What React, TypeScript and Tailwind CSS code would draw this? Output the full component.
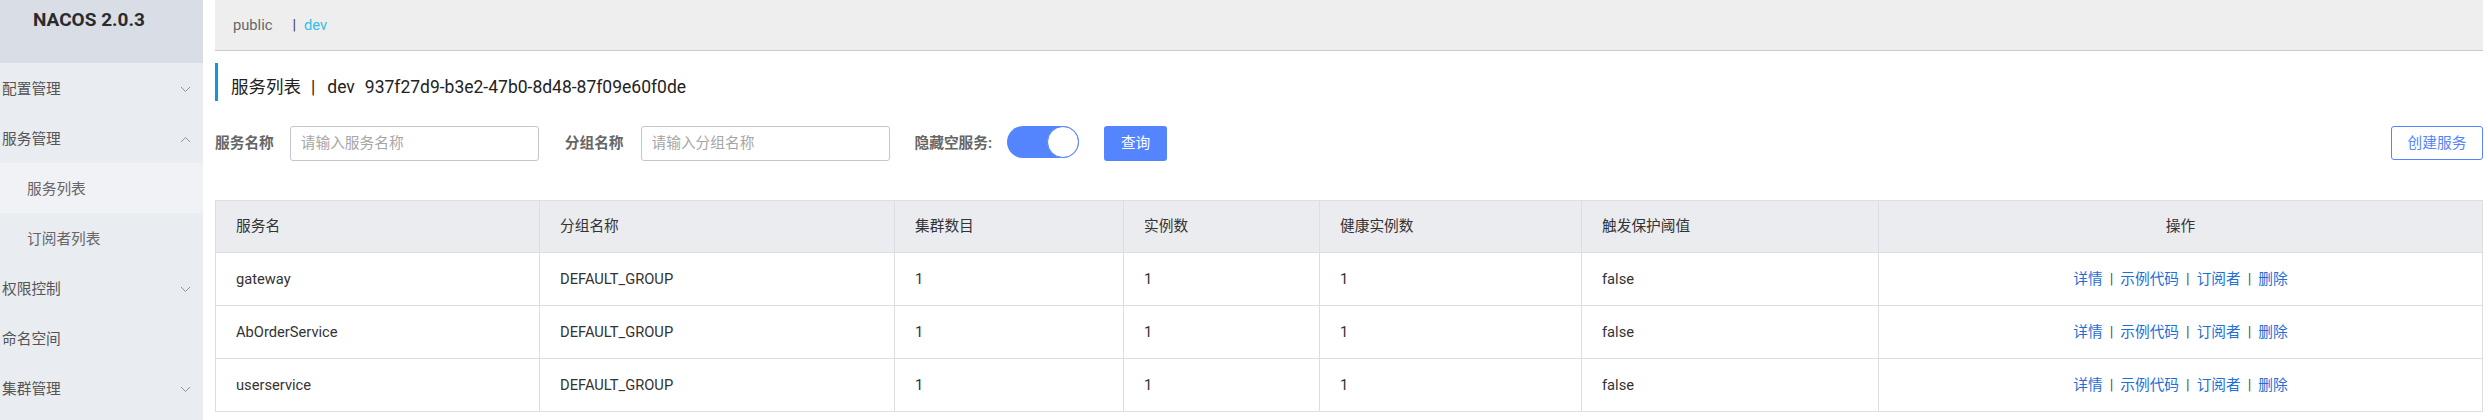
import React from "react";

const Chevron = ({ up = false }: { up?: boolean }) => (
  <svg width="11" height="7" viewBox="0 0 11 7" className="shrink-0">
    <path
      d={up ? "M1 6 L5.5 1.5 L10 6" : "M1 1 L5.5 5.5 L10 1"}
      fill="none"
      stroke="#8e939c"
      strokeWidth="1"
    />
  </svg>
);

const menu: { label: string; sub?: boolean; chevron?: "up" | "down"; active?: boolean }[] = [
  { label: "配置管理", chevron: "down" },
  { label: "服务管理", chevron: "up" },
  { label: "服务列表", sub: true, active: true },
  { label: "订阅者列表", sub: true },
  { label: "权限控制", chevron: "down" },
  { label: "命名空间" },
  { label: "集群管理", chevron: "down" },
];

const cols = [
  { title: "服务名", w: "w-[324px]" },
  { title: "分组名称", w: "w-[355px]" },
  { title: "集群数目", w: "w-[229px]" },
  { title: "实例数", w: "w-[196px]" },
  { title: "健康实例数", w: "w-[262px]" },
  { title: "触发保护阈值", w: "w-[297px]" },
];

const rows = [
  ["gateway", "DEFAULT_GROUP", "1", "1", "1", "false"],
  ["AbOrderService", "DEFAULT_GROUP", "1", "1", "1", "false"],
  ["userservice", "DEFAULT_GROUP", "1", "1", "1", "false"],
];

const Sep = () => <span className="mx-[7px] text-[#555]">|</span>;

export default function App() {
  return (
    <div className="flex w-[2488px] h-[420px] bg-white overflow-hidden font-[Roboto,'Noto_Sans_CJK_SC',sans-serif] text-[14.7px] text-[#333]">
      <aside className="w-[203px] h-full shrink-0 bg-[#e9ecf1]">
        <div className="h-[63px] bg-[#d9dee6] pl-[33px] pt-[8px]">
          <div className="text-[19px] leading-[23px] font-bold text-[#2b2b2b]">NACOS 2.0.3</div>
        </div>
        {menu.map((m) => (
          <div
            key={m.label}
            className={
              "h-[50px] flex items-center justify-between pr-[12px] pt-[3px] " +
              (m.sub ? "pl-[27px] text-[#666] " : "pl-[2px] text-[#555] ") +
              (m.active ? "bg-[#f0f2f6]" : "")
            }
          >
            <span>{m.label}</span>
            {m.chevron && <Chevron up={m.chevron === "up"} />}
          </div>
        ))}
      </aside>

      <main className="flex-1 pl-[12px] pr-[5px]">
        <div className="h-[51px] bg-[#eeeeee] border-b border-[#cccccc] flex items-center pl-[18px] pt-[1px] text-[14.7px]">
          <span className="text-[#666]">public</span>
          <span className="ml-[20px] text-[#444]">|</span>
          <span className="ml-[8px] text-[#33bfe2]">dev</span>
        </div>

        <div className="mt-[12px] h-[38px] border-l-[3px] border-[#1296db] pl-[13px] pt-[11px] flex items-center text-[17.5px] text-[#222]">
          <span>服务列表</span>
          <span className="ml-[10px] mr-[12px]">|</span>
          <span>dev</span>
          <span className="ml-[10px]">937f27d9-b3e2-47b0-8d48-87f09e60f0de</span>
        </div>

        <div className="mt-[25px] h-[35px] flex items-start">
          <span className="h-[35px] flex items-center font-bold text-[#666]">服务名称</span>
          <div className="ml-[16px] w-[249px] h-[35px] border border-[#c4c6cf] rounded-[3px] flex items-center pl-[10px] text-[#a6a6a6]">
            请输入服务名称
          </div>
          <span className="ml-[26px] h-[35px] flex items-center font-bold text-[#666]">分组名称</span>
          <div className="ml-[17px] w-[249px] h-[35px] border border-[#c4c6cf] rounded-[3px] flex items-center pl-[10px] text-[#a6a6a6]">
            请输入分组名称
          </div>
          <span className="ml-[25px] h-[35px] flex items-center font-bold text-[#666]">隐藏空服务:</span>
          <div className="ml-[15px] w-[72px] h-[32px] rounded-full bg-[#5584ff] flex items-center justify-end">
            <div className="w-[32px] h-[32px] rounded-full bg-white border border-[#5584ff]" />
          </div>
          <button className="ml-[25px] w-[63px] h-[35px] rounded-[3px] bg-[#5584ff] text-white text-[14.7px]">
            查询
          </button>
          <button className="ml-auto w-[92px] h-[34px] rounded-[3px] border border-[#5584ff] bg-white text-[#5584ff] text-[14.7px]">
            创建服务
          </button>
        </div>

        <div className="mt-[39px] w-[2268px] border border-[#dcdee3]">
          <div className="flex h-[52px] bg-[#ebecf0] border-b border-[#dcdee3]">
            {cols.map((c) => (
              <div key={c.title} className={c.w + " shrink-0 border-r border-[#dcdee3] flex items-center pl-[20px]"}>
                {c.title}
              </div>
            ))}
            <div className="flex-1 flex items-center justify-center">操作</div>
          </div>
          {rows.map((r, i) => (
            <div
              key={r[0]}
              className={
                "flex bg-white " + (i < rows.length - 1 ? "h-[53px] border-b border-[#dcdee3]" : "h-[52px]")
              }
            >
              {r.map((v, j) => (
                <div key={j} className={cols[j].w + " shrink-0 border-r border-[#dcdee3] flex items-center pl-[20px]"}>
                  {v}
                </div>
              ))}
              <div className="flex-1 flex items-center justify-center text-[#1e6fd9]">
                <span>详情</span>
                <Sep />
                <span>示例代码</span>
                <Sep />
                <span>订阅者</span>
                <Sep />
                <span>删除</span>
              </div>
            </div>
          ))}
        </div>
      </main>
    </div>
  );
}
